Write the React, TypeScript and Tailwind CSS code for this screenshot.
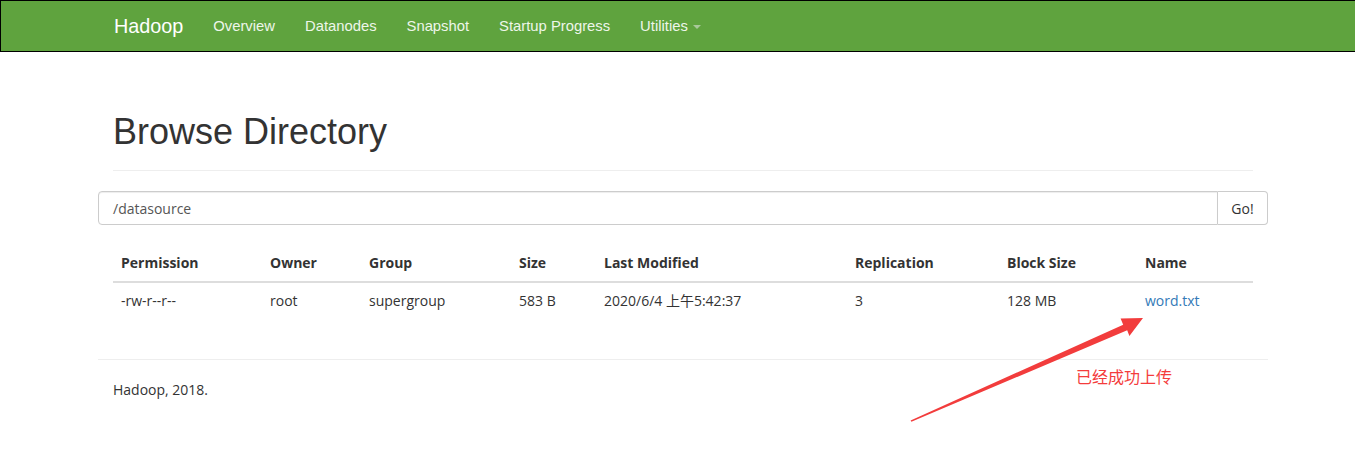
const columns = [
  { label: 'Permission', w: 'w-[149px]' },
  { label: 'Owner', w: 'w-[99px]' },
  { label: 'Group', w: 'w-[150px]' },
  { label: 'Size', w: 'w-[85px]' },
  { label: 'Last Modified', w: 'w-[251px]' },
  { label: 'Replication', w: 'w-[152px]' },
  { label: 'Block Size', w: 'w-[138px]' },
  { label: 'Name', w: 'w-[116px]' },
];

const navItems = ['Overview', 'Datanodes', 'Snapshot', 'Startup Progress'];

function Navbar() {
  return (
    <nav className="h-[52px] bg-[#5fa33e] border-t border-b border-l border-black font-['Liberation_Sans',Arial,sans-serif]">
      <div className="ml-[98px] w-[1170px] flex items-center h-[50px]">
        <span className="px-[15px] text-[19.8px] text-white leading-[50px]">Hadoop</span>
        {navItems.map((item) => (
          <a key={item} className="px-[15px] text-[14.8px] text-[#eef6ea] leading-[50px]">
            {item}
          </a>
        ))}
        <a className="px-[15px] text-[14.8px] text-[#eef6ea] leading-[50px] flex items-center">
          Utilities
          <span className="ml-[5px] mt-[2px] inline-block w-0 h-0 border-l-[4px] border-r-[4px] border-t-[4px] border-l-transparent border-r-transparent border-t-[#a9c89a]"></span>
        </a>
      </div>
    </nav>
  );
}

function Arrow() {
  return (
    <svg className="absolute left-0 top-0 pointer-events-none" width="1355" height="467" viewBox="0 0 1355 467">
      <polygon
        fill="#f23c3c"
        points="910.6,420.4 1123.2,324.8 1120.6,318.4 1143,318 1129.4,336 1127.2,330.2 911.4,421.8"
      />
    </svg>
  );
}

export default function App() {
  return (
    <div className="relative w-[1355px] h-[467px] bg-white overflow-hidden text-[#333]">
      <Navbar />

      <div className="ml-[98px] w-[1170px] font-['Open_Sans','Noto_Sans',sans-serif]">
        <div className="mx-[15px] mt-[60px] pb-[18px] border-b border-[#eee]">
          <h1 className="text-[36px] leading-[40px] font-['Liberation_Sans',Arial,sans-serif] text-[#333]">
            Browse Directory
          </h1>
        </div>

        <div className="mt-[20px] flex h-[34px]">
          <div className="flex-1 border border-[#ccc] rounded-l-[4px] shadow-[inset_0_1px_1px_rgba(0,0,0,0.075)] px-[14px] flex items-center text-[14px] text-[#555]">
            /datasource
          </div>
          <button className="w-[50px] border border-l-0 border-[#ccc] rounded-r-[4px] bg-white text-[14px] text-[#333]">
            Go!
          </button>
        </div>

        <div className="mx-[15px] mt-[20px]">
          <table className="w-[1140px] table-fixed border-collapse text-[14px]">
            <thead>
              <tr>
                {columns.map((c) => (
                  <th
                    key={c.label}
                    className={`${c.w} text-left font-bold px-[8px] py-[8px] leading-[20px] border-b-2 border-[#ddd]`}
                  >
                    {c.label}
                  </th>
                ))}
              </tr>
            </thead>
            <tbody>
              <tr>
                <td className="px-[8px] py-[8px] leading-[20px]">-rw-r--r--</td>
                <td className="px-[8px] py-[8px] leading-[20px]">root</td>
                <td className="px-[8px] py-[8px] leading-[20px]">supergroup</td>
                <td className="px-[8px] py-[8px] leading-[20px]">583 B</td>
                <td className="px-[8px] py-[8px] leading-[20px] font-['Open_Sans','Noto_Sans_CJK_SC',sans-serif]">
                  2020/6/4 上午5:42:37
                </td>
                <td className="px-[8px] py-[8px] leading-[20px]">3</td>
                <td className="px-[8px] py-[8px] leading-[20px]">128 MB</td>
                <td className="px-[8px] py-[8px] leading-[20px]">
                  <a className="text-[#337ab7]">word.txt</a>
                </td>
              </tr>
            </tbody>
          </table>
        </div>

        <div className="mt-[40px] border-t border-[#eee] flex justify-between">
          <p className="ml-[15px] mt-[20px] text-[14px] leading-[20px]">Hadoop, 2018.</p>
          <p className="mr-[96px] mt-[5px] text-[16px] leading-[22px] text-[#f43c3c] font-['Noto_Sans_CJK_SC',sans-serif]">
            已经成功上传
          </p>
        </div>
      </div>

      <Arrow />
    </div>
  );
}
